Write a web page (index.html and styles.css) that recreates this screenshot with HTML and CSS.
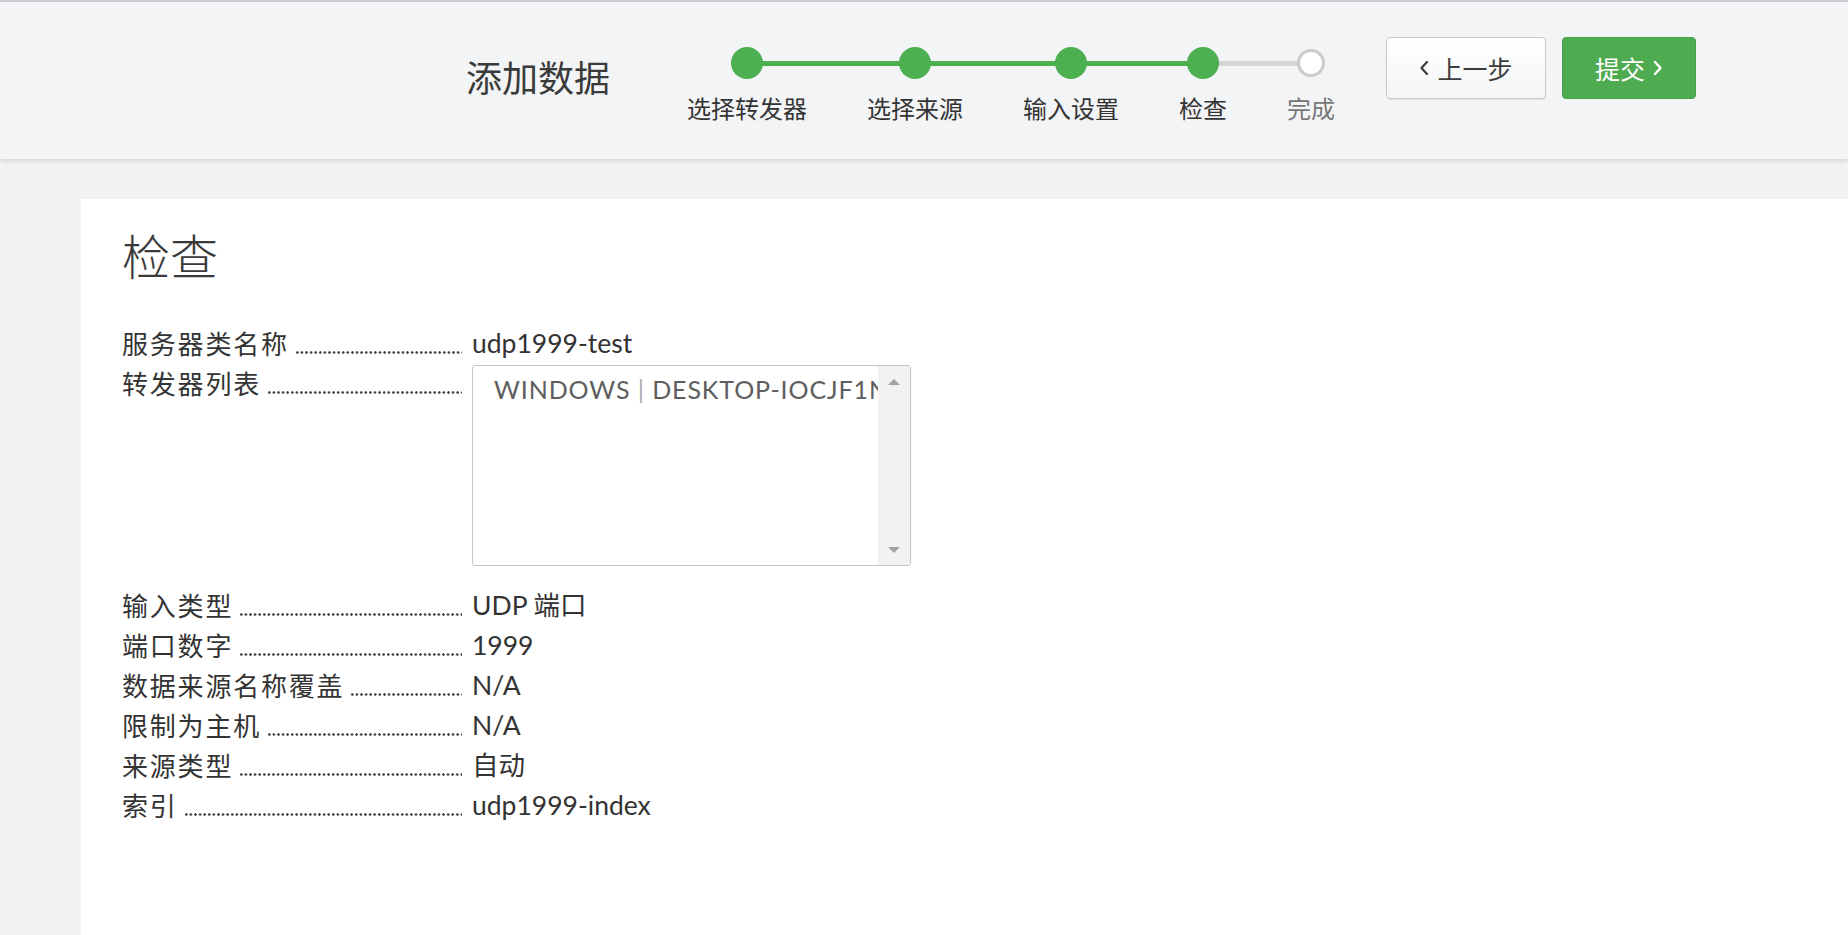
FILE: index.html
```html
<!DOCTYPE html>
<html lang="zh-CN">
<head>
<meta charset="utf-8">
<title>添加数据</title>
<link rel="stylesheet" href="styles.css">
</head>
<body>
<header class="topbar">
  <h1 class="page-title">添加数据</h1>
  <ol class="steps">
    <li class="step done"><span class="dot"></span><span class="step-label">选择转发器</span></li>
    <li class="step done"><span class="dot"></span><span class="step-label">选择来源</span></li>
    <li class="step done"><span class="dot"></span><span class="step-label">输入设置</span></li>
    <li class="step current"><span class="dot"></span><span class="step-label">检查</span></li>
    <li class="step todo"><span class="dot"></span><span class="step-label">完成</span></li>
  </ol>
  <div class="actions">
    <button class="btn btn-back" type="button"><svg class="chev" viewBox="0 0 10 16" width="10" height="16"><path d="M8 2 L2.5 8 L8 14" fill="none" stroke="currentColor" stroke-width="2.2" stroke-linecap="round" stroke-linejoin="round"/></svg>上一步</button>
    <button class="btn btn-submit" type="button">提交<svg class="chev" viewBox="0 0 10 16" width="10" height="16"><path d="M2 2 L7.5 8 L2 14" fill="none" stroke="currentColor" stroke-width="2.4" stroke-linecap="round" stroke-linejoin="round"/></svg></button>
  </div>
</header>
<div class="content">
  <main class="panel">
    <h2 class="panel-title">检查</h2>
    <dl class="review">
      <div class="row"><dt><span class="lbl">服务器类名称</span><span class="leader"></span></dt><dd>udp1999-test</dd></div>
      <div class="row row-box"><dt><span class="lbl">转发器列表</span><span class="leader"></span></dt><dd>
        <div class="listbox">
          <div class="listbox-text">WINDOWS <span class="sep">|</span> DESKTOP-IOCJF1N</div>
          <div class="listbox-scroll"><span class="arrow up"></span><span class="arrow down"></span></div>
        </div>
      </dd></div>
      <div class="row"><dt><span class="lbl">输入类型</span><span class="leader"></span></dt><dd>UDP 端口</dd></div>
      <div class="row"><dt><span class="lbl">端口数字</span><span class="leader"></span></dt><dd>1999</dd></div>
      <div class="row"><dt><span class="lbl">数据来源名称覆盖</span><span class="leader"></span></dt><dd>N/A</dd></div>
      <div class="row"><dt><span class="lbl">限制为主机</span><span class="leader"></span></dt><dd>N/A</dd></div>
      <div class="row"><dt><span class="lbl">来源类型</span><span class="leader"></span></dt><dd>自动</dd></div>
      <div class="row"><dt><span class="lbl">索引</span><span class="leader"></span></dt><dd>udp1999-index</dd></div>
    </dl>
  </main>
</div>
</body>
</html>
```

FILE: styles.css
```css
* { box-sizing: border-box; }
html, body { margin: 0; padding: 0; }
body {
  background: #f2f2f3;
  font-family: Lato, "Noto Sans CJK SC", sans-serif;
  color: #333;
  height: 935px;
  overflow: hidden;
}

/* ---------- header ---------- */
.topbar {
  position: relative;
  z-index: 2;
  height: 159px;
  border-top: 2px solid #c9cdd2;
  background: #f3f4f6;
  box-shadow: 0 2px 5px rgba(0, 0, 0, 0.13);
  display: flex;
  align-items: flex-start;
  padding: 35px 0 0 466px;
}
.page-title {
  margin: 17px 0 0;
  font-size: 36px;
  line-height: 44px;
  font-weight: 400;
  color: #3a3a3a;
  font-family: "Noto Sans CJK SC", sans-serif;
  width: 144px;
  white-space: nowrap;
}

.steps {
  list-style: none;
  margin: 10px 0 0 77px;
  padding: 0;
  display: flex;
  gap: 60px;
}
.step {
  position: relative;
  display: flex;
  flex-direction: column;
  align-items: center;
}
.step::before,
.step::after {
  content: "";
  position: absolute;
  top: 14px;
  height: 5px;
  background: #d2d4d6;
}
.step::before { left: -30px; right: 50%; }
.step::after { left: 50%; right: -30px; }
.step:first-child::before,
.step:last-child::after { display: none; }
.step.done::after,
.step.done::before,
.step.current::before { background: #4caf50; }

.dot {
  position: relative;
  z-index: 1;
  width: 32px;
  height: 32px;
  border-radius: 50%;
  background: #4caf50;
}
.step.todo .dot {
  width: 28px;
  height: 28px;
  margin: 2px 0;
  background: #fff;
  border: 3px solid #c9cbcd;
}
.step-label {
  margin-top: 14px;
  font-size: 24px;
  line-height: 30px;
  font-family: "Noto Sans CJK SC", sans-serif;
  color: #333;
  white-space: nowrap;
}
.step.todo .step-label { color: #777; }

.actions {
  margin-left: 51px;
  display: flex;
  gap: 16px;
}
.btn {
  height: 62px;
  border-radius: 4px;
  font-family: "Noto Sans CJK SC", sans-serif;
  font-size: 25px;
  display: flex;
  align-items: center;
  justify-content: center;
  gap: 8px;
  cursor: pointer;
  padding: 0;
}
.btn-back {
  width: 160px;
  background: linear-gradient(#ffffff, #f4f5f6);
  border: 1px solid #c6c8ca;
  color: #3c3c3c;
  box-shadow: 0 1px 1px rgba(0, 0, 0, 0.08);
}
.btn-submit {
  width: 134px;
  background: #4eab50;
  border: 1px solid #47a049;
  color: #fff;
}
.chev { display: block; }

/* ---------- content ---------- */
.content {
  padding: 40px 0 0 81px;
}
.panel {
  background: #fff;
  height: 736px;
  padding: 26px 0 0 41px;
}
.panel-title {
  margin: 0;
  font-size: 48px;
  line-height: 58px;
  font-weight: 300;
  color: #3a3a3a;
  font-family: "Noto Sans CJK SC", sans-serif;
}

.review {
  margin: 40px 0 0;
}
.row {
  display: flex;
  align-items: flex-start;
  font-size: 26px;
  line-height: 40px;
}
.row dt {
  width: 350px;
  flex: none;
  display: flex;
}
.lbl {
  white-space: nowrap;
  font-family: "Noto Sans CJK SC", sans-serif;
  font-size: 26px;
  letter-spacing: 1.8px;
  color: #333;
}
.leader {
  flex: 1;
  margin: 0 10px 0 6px;
  background-image: radial-gradient(circle, #444 1px, transparent 1.5px);
  background-size: 4.6px 3px;
  background-repeat: repeat-x;
  background-position: 0 28px;
}
.row dd {
  margin: 0;
  color: #333;
  white-space: nowrap;
  font-size: 26.5px;
}

.row-box dd { padding-top: 2px; margin-bottom: 19px; }
.listbox {
  width: 439px;
  height: 201px;
  border: 1px solid #c4c6c8;
  border-radius: 3px;
  display: flex;
  overflow: hidden;
  background: #fff;
}
.listbox-text {
  flex: 1;
  overflow: hidden;
  white-space: nowrap;
  padding: 9px 0 0 21px;
  font-size: 25px;
  letter-spacing: 0.9px;
  line-height: 28px;
  color: #5e5e5e;
}
.sep { color: #aaa; }
.listbox-scroll {
  width: 32px;
  flex: none;
  background: #f2f2f2;
  display: flex;
  flex-direction: column;
  justify-content: space-between;
  align-items: center;
  padding: 13px 0 12px;
}
.arrow {
  width: 0;
  height: 0;
  border-left: 6px solid transparent;
  border-right: 6px solid transparent;
}
.arrow.up { border-bottom: 6px solid #a3a3a3; }
.arrow.down { border-top: 6px solid #a3a3a3; }
```
